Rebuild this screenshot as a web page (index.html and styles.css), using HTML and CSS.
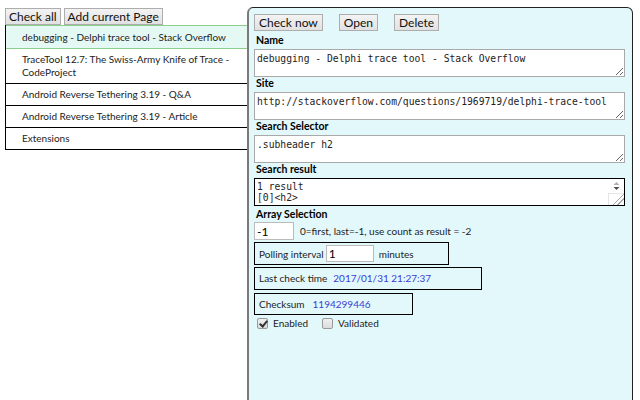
FILE: index.html
```html
<!DOCTYPE html>
<html>
<head>
<meta charset="utf-8">
<link rel="stylesheet" href="styles.css">
</head>
<body>
<div class="app">
  <div class="sidebar">
    <div class="toolbar">
      <button class="btn">Check all</button>
      <button class="btn">Add current Page</button>
    </div>
    <ul class="list">
      <li class="item active">debugging - Delphi trace tool - Stack Overflow</li>
      <li class="item">TraceTool 12.7: The Swiss-Army Knife of Trace - CodeProject</li>
      <li class="item">Android Reverse Tethering 3.19 - Q&amp;A</li>
      <li class="item">Android Reverse Tethering 3.19 - Article</li>
      <li class="item">Extensions</li>
    </ul>
  </div>
  <div class="panel">
    <div class="actions">
      <button class="btn">Check now</button>
      <button class="btn">Open</button>
      <button class="btn">Delete</button>
    </div>
    <div class="label">Name</div>
    <textarea class="field">debugging - Delphi trace tool - Stack Overflow</textarea>
    <div class="label">Site</div>
    <textarea class="field">http://stackoverflow.com/questions/1969719/delphi-trace-tool</textarea>
    <div class="label">Search Selector</div>
    <textarea class="field">.subheader h2</textarea>
    <div class="label">Search result</div>
    <div class="result">
      <div class="result-text">1 result<br>[0]&lt;h2&gt;</div>
      <div class="scrollbar">
        <svg width="9" height="12" viewBox="0 0 9 12"><path d="M1.5 5 L4.5 2 L7.5 5 Z" fill="#b0b0b0"/><path d="M1.5 7 L4.5 10 L7.5 7 Z" fill="#505050"/></svg>
        <div class="grip"></div>
      </div>
    </div>
    <div class="label">Array Selection</div>
    <div class="row">
      <input class="num" value="-1">
      <span class="hint">0=first, last=-1, use count as result = -2</span>
    </div>
    <div class="box polling">
      <span>Polling interval</span>
      <input class="interval" value="1">
      <span>minutes</span>
    </div>
    <div class="box lastcheck">
      <span>Last check time</span>
      <span class="value">2017/01/31 21:27:37</span>
    </div>
    <div class="box checksum">
      <span>Checksum</span>
      <span class="value">1194299446</span>
    </div>
    <div class="checks">
      <label class="check"><input class="cb" type="checkbox" checked> Enabled</label>
      <label class="check"><input class="cb" type="checkbox"> Validated</label>
    </div>
  </div>
</div>
</body>
</html>
```
FILE: styles.css
```css
html, body {
  margin: 0;
  padding: 0;
  background: #fff;
  font-family: Lato, "Open Sans", sans-serif;
  font-size: 10px;
  color: #222;
}
.app {
  display: flex;
  align-items: flex-start;
  height: 400px;
  overflow: hidden;
}
.sidebar {
  width: 242px;
  padding: 8px 0 0 5px;
  flex: none;
}
.toolbar {
  display: flex;
  gap: 3px;
  height: 17px;
}
.btn {
  font-family: Lato, "Open Sans", sans-serif;
  font-size: 12px;
  height: 17px;
  padding: 0 3px;
  margin: 0;
  background: linear-gradient(#f3f3f3, #e1e1e1);
  border: 1px solid #adadad;
  border-radius: 0;
  color: #111;
  line-height: 15px;
}
.list {
  list-style: none;
  margin: 0;
  padding: 0;
  border-left: 1px solid #000;
}
.item {
  padding: 4px 6px 4px 16px;
  line-height: 13px;
  border-bottom: 1px solid #000;
}
.item.active {
  background: #e5f9f4;
  border-top: 1px solid #8ccf8c;
  border-bottom: 1px solid #8ccf8c;
  padding-top: 5px;
  padding-bottom: 4px;
}
.panel {
  width: 386px;
  height: 420px;
  margin-top: 7px;
  flex: none;
  box-sizing: border-box;
  background: #e2f8fb;
  border: 1px solid #222;
  border-left: 2px solid #7a7a7a;
  border-radius: 6px 6px 0 0;
  padding: 6px 0 0 5px;
}
.actions {
  display: flex;
  gap: 16px;
  margin-bottom: 3px;
}
.actions .btn {
  padding: 0 4px;
}
.label {
  font-weight: bold;
  color: #000;
  font-size: 10.5px;
  line-height: 13px;
  padding-left: 2px;
  margin-bottom: 1.5px;
}
.field {
  display: block;
  box-sizing: border-box;
  width: 371px;
  height: 28px;
  margin: 0 0 0.5px 0;
  padding: 2px 2px;
  border: 1px solid #a9a9a9;
  background: #fff;
  font-family: "DejaVu Sans Mono", monospace;
  font-size: 9.7px;
  line-height: 13px;
  color: #222;
  resize: vertical;
}
.result {
  display: flex;
  width: 371px;
  height: 28px;
  box-sizing: border-box;
  border: 1px solid #000;
  background: #fff;
  margin-bottom: 2px;
}
.result-text {
  flex: 1;
  padding: 2px 2px;
  font-family: "DejaVu Sans Mono", monospace;
  font-size: 9.7px;
  line-height: 11px;
  overflow: hidden;
}
.scrollbar {
  width: 16px;
  display: flex;
  flex-direction: column;
  align-items: center;
  padding-top: 1px;
}
.grip {
  margin-top: 1px;
  width: 15px;
  flex: 1;
  border-left: 1px solid #e6e6e6;
  border-top: 1px solid #e6e6e6;
  background: linear-gradient(135deg, transparent 55%, #aaa 56%, #aaa 60%, transparent 61%, transparent 72%, #aaa 73%, #aaa 77%, transparent 78%);
}
.row {
  display: flex;
  align-items: center;
  gap: 6px;
  margin-bottom: 2px;
}
.num {
  width: 40px;
  height: 18px;
  box-sizing: border-box;
  border: 1px solid #bbb;
  padding: 0 2px;
  font-family: Lato, sans-serif;
  font-size: 12px;
  margin: 0;
  color: #000;
}
.box {
  display: flex;
  align-items: flex-start;
  border: 1px solid #000;
  box-sizing: border-box;
  padding: 4px 0 0 4px;
  margin-bottom: 2px;
}
.polling {
  width: 195px;
  height: 23px;
  padding-top: 0;
  align-items: center;
  gap: 2px;
  margin-bottom: 2px;
}
.interval {
  width: 48px;
  height: 17px;
  box-sizing: border-box;
  border: 1px solid #bbb;
  padding: 0 2px;
  margin: 0 3px 0 0;
  font-family: Lato, sans-serif;
  font-size: 12px;
  color: #000;
}
.lastcheck {
  width: 228px;
  height: 23px;
  gap: 6px;
  margin-bottom: 3px;
}
.checksum {
  width: 159px;
  height: 22px;
  gap: 8px;
}
.value {
  color: #3b3bd8;
}
.checks {
  display: flex;
  gap: 14px;
  padding-left: 3px;
  margin-top: 1px;
}
.check {
  display: flex;
  align-items: center;
  gap: 5px;
}
.cb {
  appearance: none;
  -webkit-appearance: none;
  margin: 0;
  width: 11px;
  height: 11px;
  border: 1px solid #9a9a9a;
  border-radius: 2px;
  background: linear-gradient(#f0f0f0, #dcdcdc);
  position: relative;
}
.cb:checked::after {
  content: "";
  position: absolute;
  left: 3px;
  top: 0px;
  width: 3px;
  height: 6px;
  border-right: 2px solid #333;
  border-bottom: 2px solid #333;
  transform: rotate(40deg);
}
```
